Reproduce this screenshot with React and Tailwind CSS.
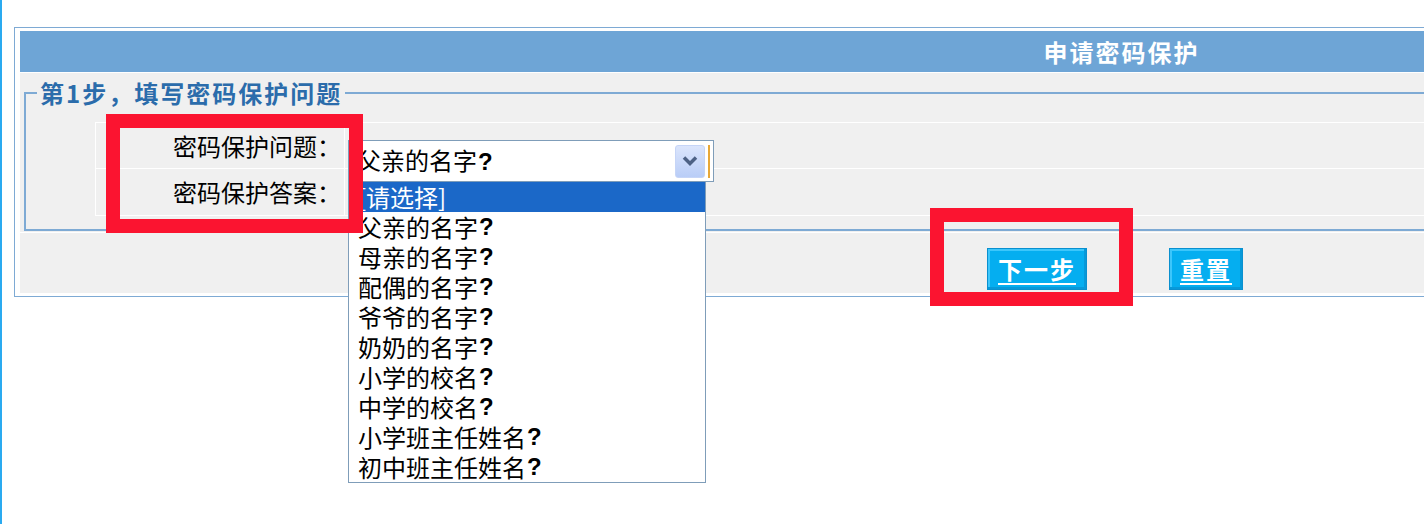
import React from "react";

const items = [
  "父亲的名字",
  "母亲的名字",
  "配偶的名字",
  "爷爷的名字",
  "奶奶的名字",
  "小学的校名",
  "中学的校名",
  "小学班主任姓名",
  "初中班主任姓名",
];

function Q({ text }) {
  return (
    <>
      {text}
      <span className="font-bold font-['Liberation_Sans',sans-serif] ml-[1px]">?</span>
    </>
  );
}

export default function App() {
  return (
    <div className="relative w-[1424px] h-[524px] overflow-hidden bg-white border-l-2 border-[#2aaaf0] pt-[27px] font-['Noto_Sans_CJK_SC','Noto_Sans',sans-serif] text-black">
      {/* outer table */}
      <div className="ml-[12px] w-[2215px] border border-[#7eaad4] pt-[3px] pb-[3px] px-[5px] bg-white flex flex-col gap-[1px]">
        {/* header */}
        <div className="h-[41px] bg-[#6ea5d6] flex items-center justify-center text-white font-bold text-[24px] leading-[41px] tracking-[2px]">
          申请密码保护
        </div>

        {/* fieldset section */}
        <div className="bg-[#f0f0f0] pt-[7px] pb-[1px] px-[4px]">
          <fieldset className="border-2 border-[#7eaad4] mb-0">
            <legend className="ml-[11px] px-[3px] text-[24px] leading-[26px] font-bold text-[#2b6cab] tracking-[2px]">
              第1步，填写密码保护问题
            </legend>
            <div className="mt-[16px] ml-[69px] mb-[13px] border border-white">
              <div className="flex h-[45px]">
                <div className="w-[249px] border-r border-white flex items-center justify-end pr-[3px] text-[24px] leading-[30px]">
                  密码保护问题：
                </div>
                <div className="flex-1" />
              </div>
              <div className="flex h-[47px] border-t border-white">
                <div className="w-[249px] border-r border-white flex items-center justify-end pr-[3px] text-[24px] leading-[30px]">
                  密码保护答案：
                </div>
                <div className="flex-1" />
              </div>
            </div>
          </fieldset>
        </div>

        {/* button row */}
        <div className="h-[60px] bg-[#f0f0f0] flex justify-center items-start pt-[15px] pr-[13px] gap-[82px]">
          <button className="w-[100px] h-[42px] bg-[#05aef0] border border-[#0a90cf] shadow-[inset_-2px_-2px_0_#0799d9,inset_2px_2px_0_#3cc6fb] text-white font-bold text-[24px] leading-[30px] underline underline-offset-[4px] tracking-[2px] flex items-center justify-center">
            下一步
          </button>
          <button className="w-[74px] h-[42px] bg-[#05aef0] border border-[#0a90cf] shadow-[inset_-2px_-2px_0_#0799d9,inset_2px_2px_0_#3cc6fb] text-white font-bold text-[24px] leading-[30px] underline underline-offset-[4px] tracking-[2px] flex items-center justify-center">
            重置
          </button>
        </div>
      </div>

      {/* open select with dropdown list */}
      <div className="absolute left-[346px] top-[140px] w-[366px] flex flex-col">
        <div className="h-[42px] border border-[#7f9db9] bg-white flex items-center pr-[3px]">
          <div className="flex-1 pl-[8px] text-[24px] leading-[30px] whitespace-nowrap">
            <Q text="父亲的名字" />
          </div>
          <div className="w-[30px] h-[33px] rounded-[3px] bg-gradient-to-b from-[#dbe5fc] to-[#b9cdf7] border border-[#c6d5f7] flex items-center justify-center">
            <svg width="18" height="12" viewBox="0 0 18 12">
              <path d="M3 2.5 L9 8.5 L15 2.5" fill="none" stroke="#4d6185" strokeWidth="3.5" />
            </svg>
          </div>
          <div className="ml-[3px] w-[2px] h-[33px] bg-[#e8a838]" />
        </div>
        <div className="w-[358px] border border-t-0 border-[#7f9db9] bg-white flex flex-col text-[24px] leading-[30px]">
          <div className="h-[30px] bg-[#1b68c8] text-white flex items-center pl-[9px] whitespace-nowrap">
            [请选择]
          </div>
          {items.map((t) => (
            <div key={t} className="h-[30px] flex items-center pl-[9px] whitespace-nowrap">
              <Q text={t} />
            </div>
          ))}
        </div>
      </div>

      {/* red annotation boxes */}
      <div className="absolute left-[104px] top-[114px] w-[257px] h-[119px] border-[14px] border-[#fb1430]" />
      <div className="absolute left-[928px] top-[208px] w-[203px] h-[98px] border-[14px] border-[#fb1430]" />
    </div>
  );
}
